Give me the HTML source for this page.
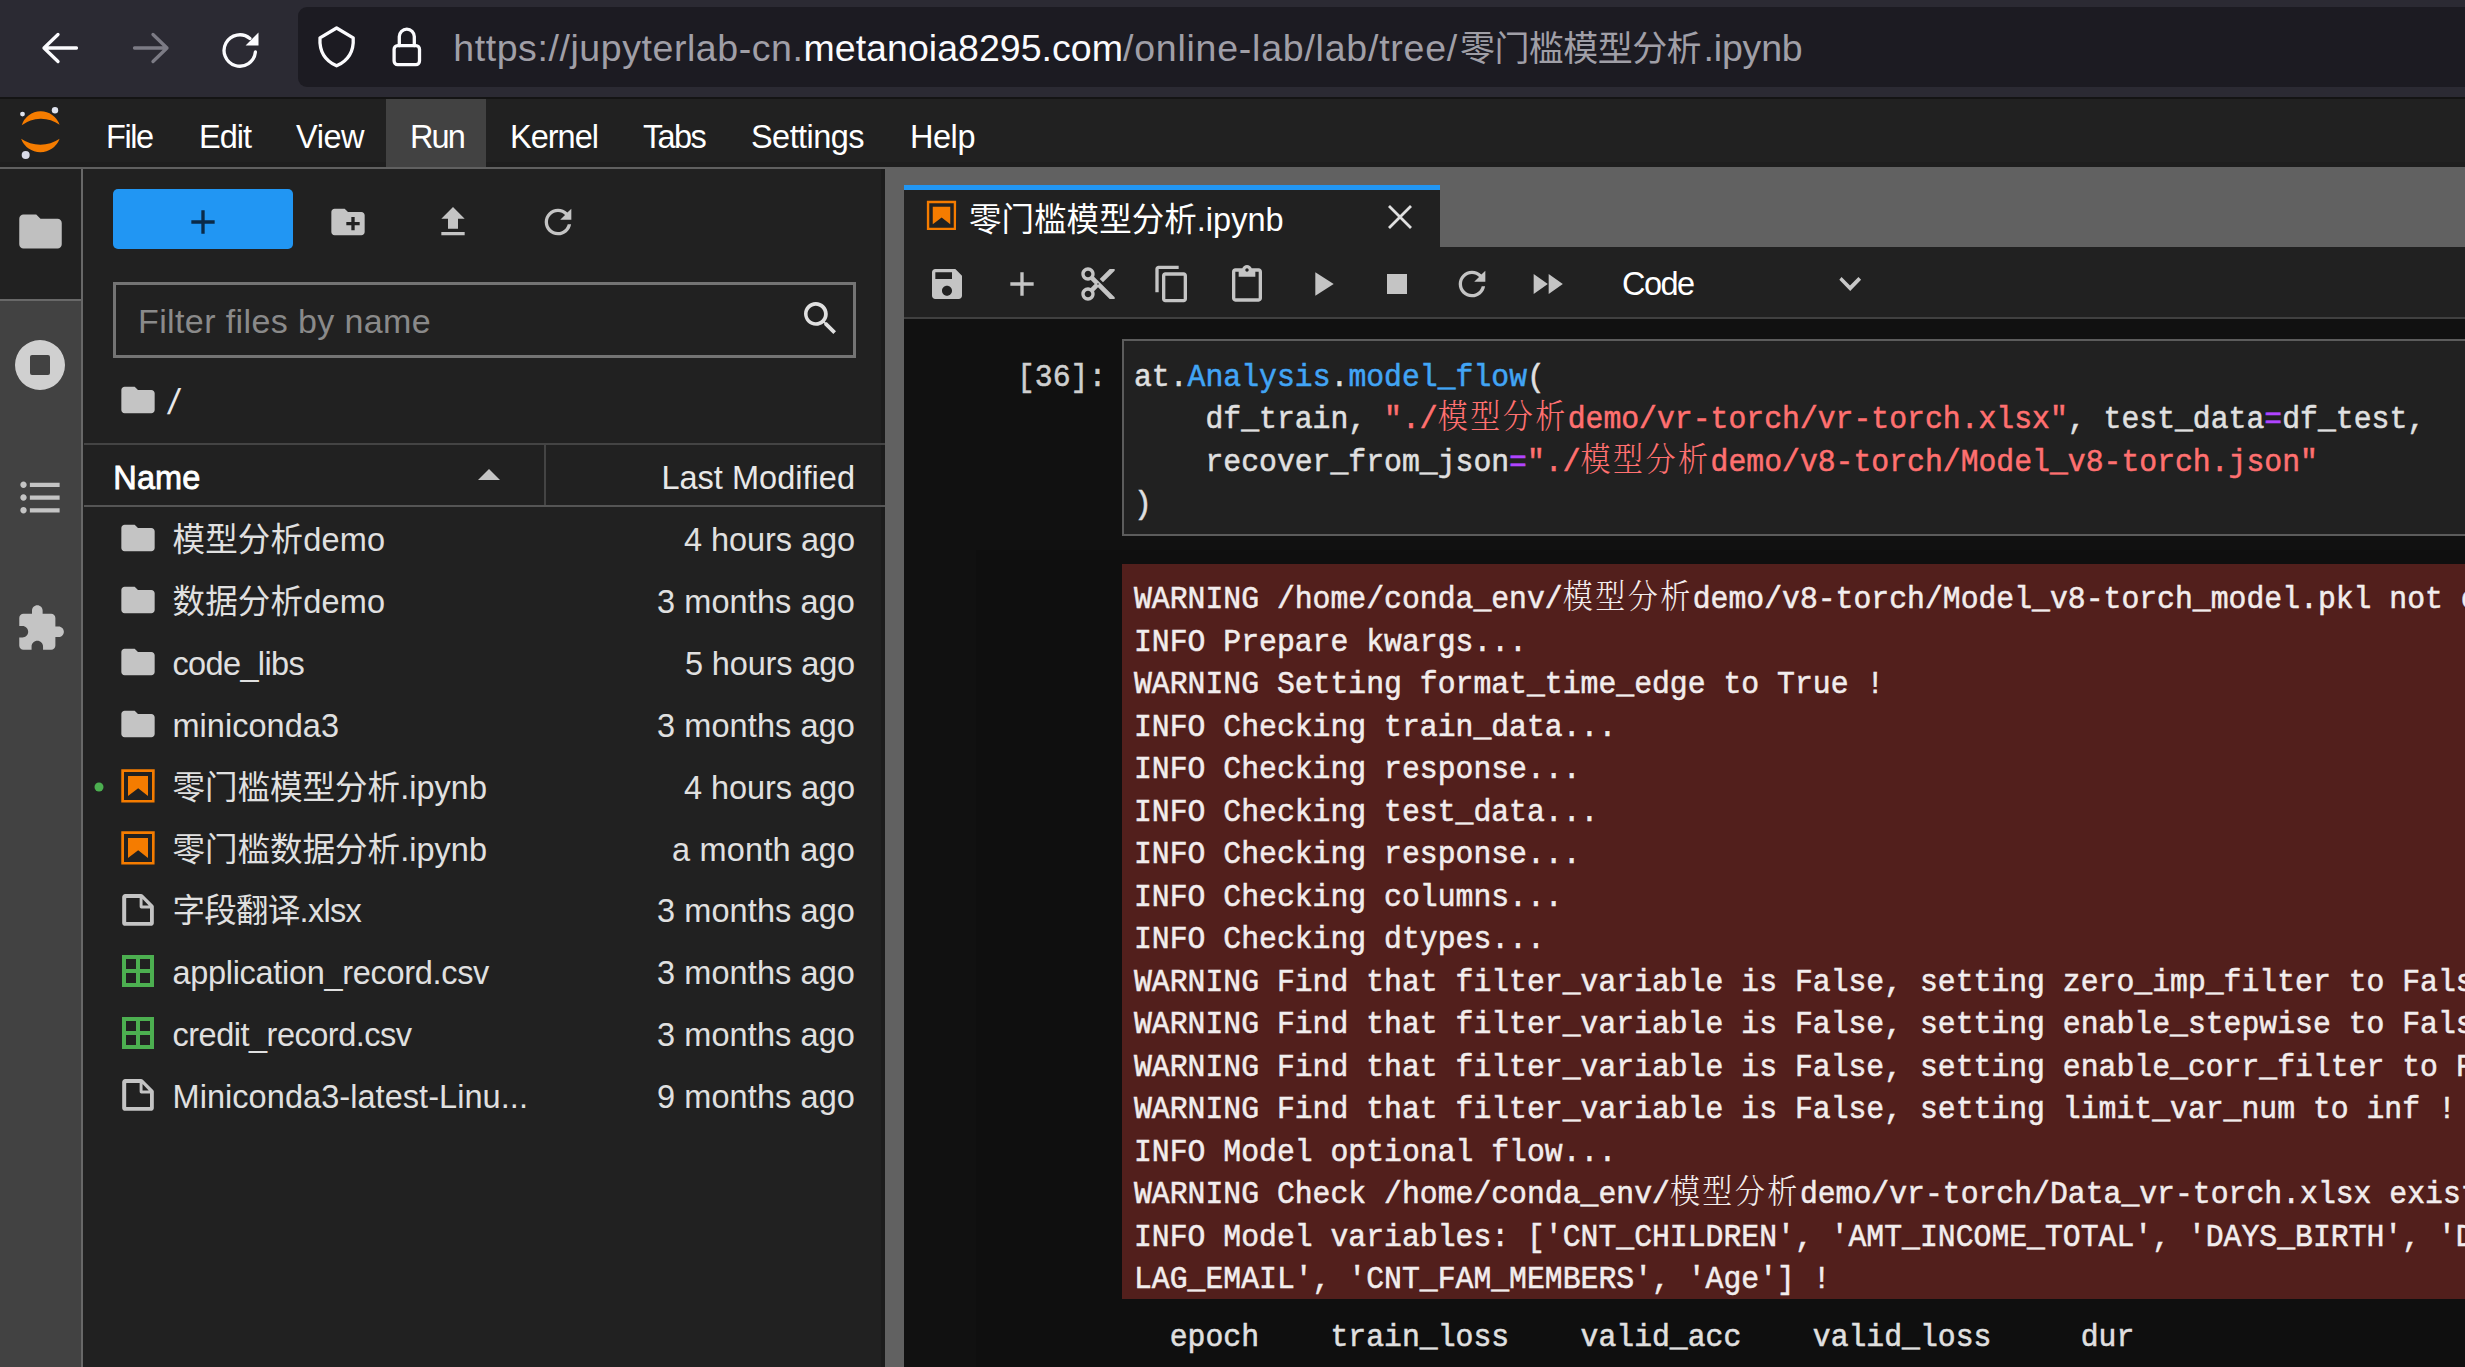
<!DOCTYPE html>
<html lang="zh"><head><meta charset="utf-8"><title>JupyterLab</title>
<style>
html,body{margin:0;padding:0;background:#111;}
body{width:2465px;height:1367px;position:relative;overflow:hidden;font-family:"Liberation Sans","Noto Sans CJK SC",sans-serif;}
#bg div,svg,.t{position:absolute;}
.t{white-space:pre;}
.c{font-family:"Liberation Mono","Noto Serif CJK SC",serif;font-size:30px;letter-spacing:2.5px;line-height:0;font-weight:300;-webkit-text-stroke:0;}
</style></head><body>
<div id="bg">
<div style="left:0px;top:0px;width:2465px;height:97px;background:#2b2a33;"></div>
<div style="left:298px;top:7px;width:2200px;height:80px;background:#1c1b22;border-radius:9px;"></div>
<div style="left:0px;top:97px;width:2465px;height:2px;background:#141414;"></div>
<div style="left:0px;top:99px;width:2465px;height:68px;background:#212121;"></div>
<div style="left:0px;top:162px;width:2465px;height:5px;background:#1e1e1e;"></div>
<div style="left:386px;top:99px;width:100px;height:68px;background:#424242;"></div>
<div style="left:0px;top:167px;width:885px;height:2.3px;background:#606060;"></div>
<div style="left:885px;top:167px;width:1600px;height:2px;background:#616161;"></div>
<div style="left:0px;top:169px;width:82px;height:1200px;background:#424242;"></div>
<div style="left:0px;top:169px;width:82px;height:130px;background:#212121;"></div>
<div style="left:0px;top:299.2px;width:82px;height:1.8px;background:#686868;"></div>
<div style="left:81.2px;top:169px;width:1.8px;height:1200px;background:#686868;"></div>
<div style="left:83.2px;top:169px;width:802px;height:1200px;background:#212121;"></div>
<div style="left:881px;top:169px;width:4px;height:1200px;background:#1c1c1c;"></div>
<div style="left:885px;top:169px;width:1600px;height:1200px;background:#616161;"></div>
<div style="left:113px;top:189px;width:180px;height:60px;background:#2196f3;border-radius:5px;"></div>
<div style="left:113px;top:282px;width:743px;height:75.5px;background:#212121;box-sizing:border-box;border:3px solid #747474;"></div>
<div style="left:84px;top:443px;width:801px;height:2px;background:#444;"></div>
<div style="left:84px;top:505px;width:801px;height:2px;background:#555;"></div>
<div style="left:544px;top:445px;width:2px;height:60px;background:#444;"></div>
<div style="left:904px;top:185px;width:536px;height:62px;background:#212121;"></div>
<div style="left:904px;top:185px;width:536px;height:5px;background:#2196f3;"></div>
<div style="left:904px;top:247px;width:1600px;height:70px;background:#212121;"></div>
<div style="left:904px;top:317px;width:1600px;height:1.8px;background:#404040;"></div>
<div style="left:904px;top:318.8px;width:1600px;height:1100px;background:#111111;"></div>
<div style="left:976px;top:549.5px;width:1600px;height:900px;background:#0f0f0f;"></div>
<div style="left:1122px;top:339px;width:1400px;height:197.3px;background:#212121;box-sizing:border-box;border:2.5px solid #5c5c5c;"></div>
<div style="left:1122px;top:563.5px;width:1400px;height:735.5px;background:#521f1c;"></div>
</div>
<svg style="left:117.6px;top:518.1px;" width="40" height="40" viewBox="0 0 24 24"><path fill="#c4c4c4" d="M10 4H4c-1.1 0-1.99.9-1.99 2L2 18c0 1.1.9 2 2 2h16c1.1 0 2-.9 2-2V8c0-1.1-.9-2-2-2h-8l-2-2z"/></svg>
<svg style="left:117.6px;top:580.0px;" width="40" height="40" viewBox="0 0 24 24"><path fill="#c4c4c4" d="M10 4H4c-1.1 0-1.99.9-1.99 2L2 18c0 1.1.9 2 2 2h16c1.1 0 2-.9 2-2V8c0-1.1-.9-2-2-2h-8l-2-2z"/></svg>
<svg style="left:117.6px;top:641.9px;" width="40" height="40" viewBox="0 0 24 24"><path fill="#c4c4c4" d="M10 4H4c-1.1 0-1.99.9-1.99 2L2 18c0 1.1.9 2 2 2h16c1.1 0 2-.9 2-2V8c0-1.1-.9-2-2-2h-8l-2-2z"/></svg>
<svg style="left:117.6px;top:703.8px;" width="40" height="40" viewBox="0 0 24 24"><path fill="#c4c4c4" d="M10 4H4c-1.1 0-1.99.9-1.99 2L2 18c0 1.1.9 2 2 2h16c1.1 0 2-.9 2-2V8c0-1.1-.9-2-2-2h-8l-2-2z"/></svg>
<svg style="left:117.6px;top:765.7px;" width="40" height="40" viewBox="0 0 22 22"><g fill="#f57c00"><path d="M18.7 3.3v15.4H3.3V3.3h15.4m1.5-1.5H1.8v18.3h18.3l.1-18.3z"/><path d="M16.5 16.5l-5.4-4.3-5.6 4.3v-11h11z"/></g></svg>
<svg style="left:117.6px;top:827.6px;" width="40" height="40" viewBox="0 0 22 22"><g fill="#f57c00"><path d="M18.7 3.3v15.4H3.3V3.3h15.4m1.5-1.5H1.8v18.3h18.3l.1-18.3z"/><path d="M16.5 16.5l-5.4-4.3-5.6 4.3v-11h11z"/></g></svg>
<svg style="left:117.6px;top:889.5px;" width="40" height="40" viewBox="0 0 22 22"><path fill="#c4c4c4" d="M19.3 8.2l-5.5-5.5c-.3-.3-.7-.5-1.2-.5H3.9c-.8.1-1.6.9-1.6 1.8v14.1c0 .9.7 1.6 1.6 1.6h14.2c.9 0 1.6-.7 1.6-1.6V9.4c.1-.5-.1-.9-.4-1.2zm-5.8-3.3l3.4 3.6h-3.4V4.9zm3.9 12.7H4.7c-.1 0-.2 0-.2-.2V4.7c0-.2.1-.3.2-.3h7.2v4.4s0 .8.3 1.1c.3.3 1.1.3 1.1.3h4.3v7.2s-.1.2-.2.2z"/></svg>
<svg style="left:117.6px;top:951.4000000000001px;" width="40" height="40" viewBox="0 0 22 22"><path fill="#4caf50" d="M2.2 2.2v17.6h17.6V2.2H2.2zm15.4 7.7h-5.5V4.4h5.5v5.5zM9.9 4.4v5.5H4.4V4.4h5.5zm-5.5 7.7h5.5v5.5H4.4v-5.5zm7.7 5.5v-5.5h5.5v5.5h-5.5z"/></svg>
<svg style="left:117.6px;top:1013.3px;" width="40" height="40" viewBox="0 0 22 22"><path fill="#4caf50" d="M2.2 2.2v17.6h17.6V2.2H2.2zm15.4 7.7h-5.5V4.4h5.5v5.5zM9.9 4.4v5.5H4.4V4.4h5.5zm-5.5 7.7h5.5v5.5H4.4v-5.5zm7.7 5.5v-5.5h5.5v5.5h-5.5z"/></svg>
<svg style="left:117.6px;top:1075.2px;" width="40" height="40" viewBox="0 0 22 22"><path fill="#c4c4c4" d="M19.3 8.2l-5.5-5.5c-.3-.3-.7-.5-1.2-.5H3.9c-.8.1-1.6.9-1.6 1.8v14.1c0 .9.7 1.6 1.6 1.6h14.2c.9 0 1.6-.7 1.6-1.6V9.4c.1-.5-.1-.9-.4-1.2zm-5.8-3.3l3.4 3.6h-3.4V4.9zm3.9 12.7H4.7c-.1 0-.2 0-.2-.2V4.7c0-.2.1-.3.2-.3h7.2v4.4s0 .8.3 1.1c.3.3 1.1.3 1.1.3h4.3v7.2s-.1.2-.2.2z"/></svg>
<svg style="left:93px;top:781px;" width="12" height="12" viewBox="0 0 12 12"><circle cx="6" cy="6" r="4.5" fill="#4caf50"/></svg>
<svg style="left:117.6px;top:380px;" width="40" height="40" viewBox="0 0 24 24"><path fill="#c4c4c4" d="M10 4H4c-1.1 0-1.99.9-1.99 2L2 18c0 1.1.9 2 2 2h16c1.1 0 2-.9 2-2V8c0-1.1-.9-2-2-2h-8l-2-2z"/></svg>
<svg style="left:478px;top:468px;" width="22" height="13" viewBox="0 0 22 13"><path fill="#c4c4c4" d="M0 12L11 1l11 11z"/></svg>
<svg style="left:183px;top:202px;" width="40" height="40" viewBox="0 0 24 24"><path fill="#0a2a48" d="M19 13h-6v6h-2v-6H5v-2h6V5h2v6h6v2z"/></svg>
<svg style="left:327.5px;top:202px;" width="40" height="40" viewBox="0 0 24 24"><path fill="#c4c4c4" d="M20 6h-8l-2-2H4c-1.11 0-1.99.89-1.99 2L2 18c0 1.11.89 2 2 2h16c1.11 0 2-.89 2-2V8c0-1.11-.89-2-2-2zm-1 8h-3v3h-2v-3h-3v-2h3V9h2v3h3v2z"/></svg>
<svg style="left:433px;top:202px;" width="40" height="40" viewBox="0 0 24 24"><path fill="#c4c4c4" d="M9 16h6v-6h4l-7-7-7 7h4zm-4 2h14v2H5z"/></svg>
<svg style="left:538.3px;top:201.9px;" width="40" height="40" viewBox="0 0 18 18"><path fill="#c4c4c4" d="M9 13.5c-2.49 0-4.5-2.01-4.5-4.5S6.51 4.5 9 4.5c1.24 0 2.36.52 3.17 1.33L10 8h5V3l-1.76 1.76C12.15 3.68 10.66 3 9 3 5.69 3 3.01 5.69 3.01 9S5.69 15 9 15c2.97 0 5.43-2.16 5.9-5h-1.52c-.46 2-2.24 3.5-4.38 3.5z"/></svg>
<svg style="left:800px;top:298px;" width="40" height="40" viewBox="0 0 18 18"><path fill="#e0e0e0" d="M12.1 10.9h-.7l-.2-.2c.8-.9 1.3-2.2 1.3-3.5 0-3-2.4-5.4-5.4-5.4S1.8 4.2 1.8 7.1s2.4 5.4 5.4 5.4c1.3 0 2.5-.5 3.5-1.3l.2.2v.7l4.1 4.1 1.2-1.2-4.1-4.1zm-5 0c-2.1 0-3.7-1.7-3.7-3.7s1.7-3.7 3.7-3.7 3.7 1.7 3.7 3.7-1.6 3.7-3.7 3.7z"/></svg>
<svg style="left:14.5px;top:206px;" width="51" height="51" viewBox="0 0 24 24"><path fill="#c0c0c0" d="M10 4H4c-1.1 0-1.99.9-1.99 2L2 18c0 1.1.9 2 2 2h16c1.1 0 2-.9 2-2V8c0-1.1-.9-2-2-2h-8l-2-2z"/></svg>
<svg style="left:15px;top:340px;" width="50" height="50" viewBox="0 0 50 50"><path fill="#d0d0d0" fill-rule="evenodd" d="M25 0a25 25 0 1 0 0 50a25 25 0 1 0 0-50zM17 15h16a2 2 0 0 1 2 2v16a2 2 0 0 1-2 2H17a2 2 0 0 1-2-2V17a2 2 0 0 1 2-2z"/></svg>
<svg style="left:14.5px;top:472px;" width="51" height="51" viewBox="0 0 24 24"><path fill="#c4c4c4" d="M4 10.5c-.83 0-1.5.67-1.5 1.5s.67 1.5 1.5 1.5 1.5-.67 1.5-1.5-.67-1.5-1.5-1.5zm0-6c-.83 0-1.5.67-1.5 1.5S3.17 7.5 4 7.5 5.5 6.83 5.5 6 4.83 4.5 4 4.5zm0 12c-.83 0-1.5.68-1.5 1.5s.68 1.5 1.5 1.5 1.5-.68 1.5-1.5-.67-1.5-1.5-1.5zM7 19h14v-2H7v2zm0-6h14v-2H7v2zm0-8v2h14V5H7z"/></svg>
<svg style="left:14.5px;top:603px;" width="51" height="51" viewBox="0 0 24 24"><path fill="#c4c4c4" d="M20.5 11H19V7c0-1.1-.9-2-2-2h-4V3.5C13 2.12 11.88 1 10.5 1S8 2.12 8 3.5V5H4c-1.1 0-1.99.9-1.99 2v3.8H3.5c1.49 0 2.7 1.21 2.7 2.7s-1.21 2.7-2.7 2.7H2V20c0 1.1.9 2 2 2h3.8v-1.5c0-1.49 1.21-2.7 2.7-2.7 1.49 0 2.7 1.21 2.7 2.7V22H17c1.1 0 2-.9 2-2v-4h1.5c1.38 0 2.5-1.12 2.5-2.5S21.88 11 20.5 11z"/></svg>
<svg style="left:0px;top:99px;" width="90" height="68" viewBox="0 99 90 68"><path fill="#f57c00" d="M21.700 125.200A20 20 0 0 1 59.600 124.700A31.600 31.600 0 0 0 21.700 125.200z"/>
<path fill="#f57c00" d="M21.100 138.800A34.400 34.400 0 0 0 59.600 138.800A20.500 20.500 0 0 1 21.100 138.800z"/>
<circle cx="55" cy="110.300" r="3.200" fill="#dfe3ee"/><circle cx="22.500" cy="114.100" r="2.400" fill="#dfe3ee"/><circle cx="25.700" cy="155" r="4" fill="#d9dbe8"/></svg>
<svg style="left:0px;top:0px;" width="460" height="97" viewBox="0 0 460 97"><g fill="none" stroke="#fbfbfe" stroke-width="3.300" stroke-linecap="round" stroke-linejoin="round">
<path d="M76.500 48H44M58 34.500L44 48l14 13.500"/>
<path stroke="#7c7b85" d="M134.500 48H167M153 34.500L167 48l-14 13.500"/>
<path d="M249.900 38.500A15.700 15.700 0 1 0 255.400 52"/>
<path d="M336.600 28L353.200 37.800C354 51 348.500 60.500 336.600 65.800C324.700 60.500 319.200 51 320 37.800Z"/>
<rect x="394.100" y="45.700" width="25.400" height="18.900" rx="3.500"/>
<path d="M399.300 45.700V36.600a7.500 7.500 0 0 1 15 0V45.700"/>
</g>
<path fill="#fbfbfe" d="M258.500 32.500V45.400H245.600Z"/></svg>
<svg style="left:923.9px;top:197.6px;" width="35" height="35" viewBox="0 0 22 22"><g fill="#f57c00"><path d="M18.7 3.3v15.4H3.3V3.3h15.4m1.5-1.5H1.8v18.3h18.3l.1-18.3z"/><path d="M16.5 16.5l-5.4-4.3-5.6 4.3v-11h11z"/></g></svg>
<svg style="left:1386px;top:203px;" width="28" height="28" viewBox="0 0 28 28"><path d="M3 3l22 22M25 3L3 25" stroke="#e0e0e0" stroke-width="2.800" fill="none"/></svg>
<svg style="left:926.7px;top:264.2px;" width="40" height="40" viewBox="0 0 24 24"><path fill="#c4c4c4" d="M17 3H5c-1.11 0-2 .9-2 2v14c0 1.1.89 2 2 2h14c1.1 0 2-.9 2-2V7l-4-4zm-5 16c-1.660 0-3-1.340-3-3s1.340-3 3-3 3 1.340 3 3-1.340 3-3 3zm3-10H5V5h10v4z"/></svg>
<svg style="left:1001.7px;top:264.2px;" width="40" height="40" viewBox="0 0 24 24"><path fill="#c4c4c4" d="M19 13h-6v6h-2v-6H5v-2h6V5h2v6h6v2z"/></svg>
<svg style="left:1077.5px;top:264.0px;" width="40" height="40" viewBox="0 0 24 24"><path fill="#c4c4c4" d="M9.640 7.640c.230-.500.360-1.050.360-1.640 0-2.210-1.790-4-4-4S2 3.790 2 6s1.790 4 4 4c.590 0 1.140-.130 1.640-.360L10 12l-2.360 2.360C7.140 14.130 6.590 14 6 14c-2.210 0-4 1.790-4 4s1.790 4 4 4 4-1.790 4-4c0-.590-.130-1.140-.360-1.640L12 14l7 7h3v-1L9.640 7.640zM6 8c-1.100 0-2-.890-2-2s.900-2 2-2 2 .890 2 2-.900 2-2 2zm0 12c-1.100 0-2-.890-2-2s.900-2 2-2 2 .890 2 2-.900 2-2 2zm6-7.500c-.280 0-.500-.220-.500-.500s.220-.500.500-.500.500.220.500.500-.220.500-.500.500zM19 3l-6 6 2 2 7-7V3h-3z"/></svg>
<svg style="left:1152.0px;top:264.0px;" width="40" height="40" viewBox="0 0 24 24"><path fill="#c4c4c4" d="M16 1H4c-1.100 0-2 .900-2 2v14h2V3h12V1zm3 4H8c-1.100 0-2 .900-2 2v14c0 1.100.900 2 2 2h11c1.100 0 2-.900 2-2V7c0-1.100-.900-2-2-2zm0 16H8V7h11v14z"/></svg>
<svg style="left:1226.8px;top:264.5px;" width="40" height="40" viewBox="0 0 24 24"><path fill="#c4c4c4" d="M19 2h-4.180C14.400.840 13.300 0 12 0c-1.300 0-2.400.840-2.820 2H5c-1.100 0-2 .900-2 2v16c0 1.100.900 2 2 2h14c1.100 0 2-.900 2-2V4c0-1.100-.900-2-2-2zm-7 0c.550 0 1 .450 1 1s-.450 1-1 1-1-.450-1-1 .450-1 1-1zm7 18H5V4h2v3h10V4h2v16z"/></svg>
<svg style="left:1301.8px;top:264.2px;" width="40" height="40" viewBox="0 0 24 24"><path fill="#c4c4c4" d="M8 5v14l11-7z"/></svg>
<svg style="left:1377.0px;top:264.2px;" width="40" height="40" viewBox="0 0 24 24"><path fill="#c4c4c4" d="M6 6h12v12H6z"/></svg>
<svg style="left:1452.0px;top:264.2px;" width="40" height="40" viewBox="0 0 18 18"><path fill="#c4c4c4" d="M9 13.500c-2.490 0-4.500-2.010-4.500-4.500S6.510 4.500 9 4.500c1.240 0 2.360.520 3.170 1.330L10 8h5V3l-1.760 1.760C12.150 3.680 10.660 3 9 3 5.690 3 3.010 5.690 3.010 9S5.690 15 9 15c2.970 0 5.430-2.160 5.900-5h-1.520c-.460 2-2.240 3.500-4.380 3.500z"/></svg>
<svg style="left:1527.0px;top:264.2px;" width="40" height="40" viewBox="0 0 24 24"><path fill="#c4c4c4" d="M4 18l8.500-6L4 6v12zm9-12v12l8.500-6L13 6z"/></svg>
<svg style="left:1830px;top:264px;" width="40" height="40" viewBox="0 0 18 18"><path fill="#c8c8c8" d="M5.200 5.900L9 9.700l3.800-3.800 1.200 1.200-4.900 5-4.900-5z"/></svg>
<div class="t" style="left:453.30px;top:21.81px;font-size:37.5px;line-height:52px;color:#a09fa7;letter-spacing:0.569px;">https://jupyterlab-cn.</div>
<div class="t" style="left:803.50px;top:21.81px;font-size:37.5px;line-height:52px;color:#fbfbfe;letter-spacing:0.034px;">metanoia8295.com</div>
<div class="t" style="left:1123.00px;top:21.81px;font-size:37.5px;line-height:52px;color:#a09fa7;letter-spacing:0.764px;">/online-lab/lab/tree/</div>
<div class="t" style="left:1460.00px;top:24.17px;font-size:35px;line-height:49px;color:#a09fa7;letter-spacing:-0.574px;">零门槛模型分析</div>
<div class="t" style="left:1703.50px;top:21.81px;font-size:37.5px;line-height:52px;color:#a09fa7;letter-spacing:-0.180px;">.ipynb</div>
<div class="t" style="left:106.00px;top:113.54px;font-size:32.5px;line-height:46px;color:#ffffff;letter-spacing:-1.469px;">File</div>
<div class="t" style="left:199.00px;top:113.54px;font-size:32.5px;line-height:46px;color:#ffffff;letter-spacing:-1.004px;">Edit</div>
<div class="t" style="left:296.00px;top:113.54px;font-size:32.5px;line-height:46px;color:#ffffff;letter-spacing:-0.465px;">View</div>
<div class="t" style="left:410.00px;top:113.54px;font-size:32.5px;line-height:46px;color:#ffffff;letter-spacing:-1.875px;">Run</div>
<div class="t" style="left:510.00px;top:113.54px;font-size:32.5px;line-height:46px;color:#ffffff;letter-spacing:-0.992px;">Kernel</div>
<div class="t" style="left:643.00px;top:113.54px;font-size:32.5px;line-height:46px;color:#ffffff;letter-spacing:-1.664px;">Tabs</div>
<div class="t" style="left:751.00px;top:113.54px;font-size:32.5px;line-height:46px;color:#ffffff;letter-spacing:-0.555px;">Settings</div>
<div class="t" style="left:910.00px;top:113.54px;font-size:32.5px;line-height:46px;color:#ffffff;letter-spacing:-0.461px;">Help</div>
<div class="t" style="left:138.00px;top:297.22px;font-size:34px;line-height:48px;color:#8a8a8a;letter-spacing:0.384px;">Filter files by name</div>
<div class="t" style="left:169.00px;top:377.03px;font-size:36px;line-height:50px;color:#e8e8e8;transform:skewX(-9deg);">/</div>
<div class="t" style="left:113.30px;top:454.94px;font-size:32.5px;line-height:46px;color:#ffffff;letter-spacing:0.124px;-webkit-text-stroke:0.8px #fff;">Name</div>
<div class="t" style="left:661.40px;top:454.94px;font-size:32.5px;line-height:46px;color:#e8e8e8;letter-spacing:0.022px;">Last Modified</div>
<div class="t" style="left:172.50px;top:517.04px;font-size:32.5px;line-height:46px;color:#e0e0e0;letter-spacing:0.173px;">模型分析demo</div>
<div class="t" style="left:684.00px;top:517.04px;font-size:32.5px;line-height:46px;color:#e0e0e0;letter-spacing:-0.061px;">4 hours ago</div>
<div class="t" style="left:172.50px;top:578.94px;font-size:32.5px;line-height:46px;color:#e0e0e0;letter-spacing:0.173px;">数据分析demo</div>
<div class="t" style="left:657.00px;top:578.94px;font-size:32.5px;line-height:46px;color:#e0e0e0;letter-spacing:0.089px;">3 months ago</div>
<div class="t" style="left:172.50px;top:640.84px;font-size:32.5px;line-height:46px;color:#e0e0e0;letter-spacing:-0.648px;">code_libs</div>
<div class="t" style="left:685.00px;top:640.84px;font-size:32.5px;line-height:46px;color:#e0e0e0;letter-spacing:-0.152px;">5 hours ago</div>
<div class="t" style="left:172.50px;top:702.74px;font-size:32.5px;line-height:46px;color:#e0e0e0;letter-spacing:0.028px;">miniconda3</div>
<div class="t" style="left:657.00px;top:702.74px;font-size:32.5px;line-height:46px;color:#e0e0e0;letter-spacing:0.089px;">3 months ago</div>
<div class="t" style="left:172.50px;top:764.64px;font-size:32.5px;line-height:46px;color:#e0e0e0;letter-spacing:0.020px;">零门槛模型分析.ipynb</div>
<div class="t" style="left:684.00px;top:764.64px;font-size:32.5px;line-height:46px;color:#e0e0e0;letter-spacing:-0.061px;">4 hours ago</div>
<div class="t" style="left:172.50px;top:826.54px;font-size:32.5px;line-height:46px;color:#e0e0e0;letter-spacing:0.020px;">零门槛数据分析.ipynb</div>
<div class="t" style="left:672.00px;top:826.54px;font-size:32.5px;line-height:46px;color:#e0e0e0;letter-spacing:0.210px;">a month ago</div>
<div class="t" style="left:172.50px;top:888.44px;font-size:32.5px;line-height:46px;color:#e0e0e0;letter-spacing:-0.724px;">字段翻译.xlsx</div>
<div class="t" style="left:657.00px;top:888.44px;font-size:32.5px;line-height:46px;color:#e0e0e0;letter-spacing:0.089px;">3 months ago</div>
<div class="t" style="left:172.50px;top:950.34px;font-size:32.5px;line-height:46px;color:#e0e0e0;letter-spacing:-0.312px;">application_record.csv</div>
<div class="t" style="left:657.00px;top:950.34px;font-size:32.5px;line-height:46px;color:#e0e0e0;letter-spacing:0.089px;">3 months ago</div>
<div class="t" style="left:172.50px;top:1012.24px;font-size:32.5px;line-height:46px;color:#e0e0e0;letter-spacing:-0.497px;">credit_record.csv</div>
<div class="t" style="left:657.00px;top:1012.24px;font-size:32.5px;line-height:46px;color:#e0e0e0;letter-spacing:0.089px;">3 months ago</div>
<div class="t" style="left:172.50px;top:1074.14px;font-size:32.5px;line-height:46px;color:#e0e0e0;letter-spacing:0.057px;">Miniconda3-latest-Linu...</div>
<div class="t" style="left:657.00px;top:1074.14px;font-size:32.5px;line-height:46px;color:#e0e0e0;letter-spacing:0.089px;">9 months ago</div>
<div class="t" style="left:969.00px;top:197.24px;font-size:32.5px;line-height:46px;color:#ffffff;letter-spacing:0.036px;">零门槛模型分析.ipynb</div>
<div class="t" style="left:1622.00px;top:261.24px;font-size:32.5px;line-height:46px;color:#ffffff;letter-spacing:-1.551px;">Code</div>
<div class="t" style="left:1017.00px;top:357.06px;font-size:29.78px;line-height:42px;color:#cfcfcf;font-family:'Liberation Mono','Noto Serif CJK SC',monospace;-webkit-text-stroke:0.5px;transform:scaleY(1.08);transform-origin:0 28.94px;">[36]:</div>
<div class="t" style="left:1134.00px;top:357.06px;font-size:29.78px;line-height:42px;color:#e0e0e0;font-family:'Liberation Mono','Noto Serif CJK SC',monospace;-webkit-text-stroke:0.5px;transform:scaleY(1.08);transform-origin:0 28.94px;">at.<span style="color:#42a5f5">Analysis</span>.<span style="color:#42a5f5">model_flow</span>(</div>
<div class="t" style="left:1134.00px;top:399.26px;font-size:29.78px;line-height:42px;color:#e0e0e0;font-family:'Liberation Mono','Noto Serif CJK SC',monospace;-webkit-text-stroke:0.5px;transform:scaleY(1.08);transform-origin:0 28.94px;">    df_train, <span style="color:#ff7070">"./<span class="c">模型分析</span>demo/vr-torch/vr-torch.xlsx"</span>, test_data<span style="color:#b044ff">=</span>df_test,</div>
<div class="t" style="left:1134.00px;top:441.76px;font-size:29.78px;line-height:42px;color:#e0e0e0;font-family:'Liberation Mono','Noto Serif CJK SC',monospace;-webkit-text-stroke:0.5px;transform:scaleY(1.08);transform-origin:0 28.94px;">    recover_from_json<span style="color:#b044ff">=</span><span style="color:#ff7070">"./<span class="c">模型分析</span>demo/v8-torch/Model_v8-torch.json"</span></div>
<div class="t" style="left:1134.00px;top:484.26px;font-size:29.78px;line-height:42px;color:#e0e0e0;font-family:'Liberation Mono','Noto Serif CJK SC',monospace;-webkit-text-stroke:0.5px;transform:scaleY(1.08);transform-origin:0 28.94px;">)</div>
<div class="t" style="left:1134.00px;top:579.06px;font-size:29.78px;line-height:42px;color:#f2eded;font-family:'Liberation Mono','Noto Serif CJK SC',monospace;-webkit-text-stroke:0.5px;transform:scaleY(1.08);transform-origin:0 28.94px;">WARNING /home/conda_env/<span class="c">模型分析</span>demo/v8-torch/Model_v8-torch_model.pkl not exists !</div>
<div class="t" style="left:1134.00px;top:621.56px;font-size:29.78px;line-height:42px;color:#f2eded;font-family:'Liberation Mono','Noto Serif CJK SC',monospace;-webkit-text-stroke:0.5px;transform:scaleY(1.08);transform-origin:0 28.94px;">INFO Prepare kwargs...</div>
<div class="t" style="left:1134.00px;top:664.06px;font-size:29.78px;line-height:42px;color:#f2eded;font-family:'Liberation Mono','Noto Serif CJK SC',monospace;-webkit-text-stroke:0.5px;transform:scaleY(1.08);transform-origin:0 28.94px;">WARNING Setting format_time_edge to True !</div>
<div class="t" style="left:1134.00px;top:706.56px;font-size:29.78px;line-height:42px;color:#f2eded;font-family:'Liberation Mono','Noto Serif CJK SC',monospace;-webkit-text-stroke:0.5px;transform:scaleY(1.08);transform-origin:0 28.94px;">INFO Checking train_data...</div>
<div class="t" style="left:1134.00px;top:749.06px;font-size:29.78px;line-height:42px;color:#f2eded;font-family:'Liberation Mono','Noto Serif CJK SC',monospace;-webkit-text-stroke:0.5px;transform:scaleY(1.08);transform-origin:0 28.94px;">INFO Checking response...</div>
<div class="t" style="left:1134.00px;top:791.56px;font-size:29.78px;line-height:42px;color:#f2eded;font-family:'Liberation Mono','Noto Serif CJK SC',monospace;-webkit-text-stroke:0.5px;transform:scaleY(1.08);transform-origin:0 28.94px;">INFO Checking test_data...</div>
<div class="t" style="left:1134.00px;top:834.06px;font-size:29.78px;line-height:42px;color:#f2eded;font-family:'Liberation Mono','Noto Serif CJK SC',monospace;-webkit-text-stroke:0.5px;transform:scaleY(1.08);transform-origin:0 28.94px;">INFO Checking response...</div>
<div class="t" style="left:1134.00px;top:876.56px;font-size:29.78px;line-height:42px;color:#f2eded;font-family:'Liberation Mono','Noto Serif CJK SC',monospace;-webkit-text-stroke:0.5px;transform:scaleY(1.08);transform-origin:0 28.94px;">INFO Checking columns...</div>
<div class="t" style="left:1134.00px;top:919.06px;font-size:29.78px;line-height:42px;color:#f2eded;font-family:'Liberation Mono','Noto Serif CJK SC',monospace;-webkit-text-stroke:0.5px;transform:scaleY(1.08);transform-origin:0 28.94px;">INFO Checking dtypes...</div>
<div class="t" style="left:1134.00px;top:961.56px;font-size:29.78px;line-height:42px;color:#f2eded;font-family:'Liberation Mono','Noto Serif CJK SC',monospace;-webkit-text-stroke:0.5px;transform:scaleY(1.08);transform-origin:0 28.94px;">WARNING Find that filter_variable is False, setting zero_imp_filter to False !</div>
<div class="t" style="left:1134.00px;top:1004.06px;font-size:29.78px;line-height:42px;color:#f2eded;font-family:'Liberation Mono','Noto Serif CJK SC',monospace;-webkit-text-stroke:0.5px;transform:scaleY(1.08);transform-origin:0 28.94px;">WARNING Find that filter_variable is False, setting enable_stepwise to False !</div>
<div class="t" style="left:1134.00px;top:1046.56px;font-size:29.78px;line-height:42px;color:#f2eded;font-family:'Liberation Mono','Noto Serif CJK SC',monospace;-webkit-text-stroke:0.5px;transform:scaleY(1.08);transform-origin:0 28.94px;">WARNING Find that filter_variable is False, setting enable_corr_filter to False !</div>
<div class="t" style="left:1134.00px;top:1089.06px;font-size:29.78px;line-height:42px;color:#f2eded;font-family:'Liberation Mono','Noto Serif CJK SC',monospace;-webkit-text-stroke:0.5px;transform:scaleY(1.08);transform-origin:0 28.94px;">WARNING Find that filter_variable is False, setting limit_var_num to inf !</div>
<div class="t" style="left:1134.00px;top:1131.56px;font-size:29.78px;line-height:42px;color:#f2eded;font-family:'Liberation Mono','Noto Serif CJK SC',monospace;-webkit-text-stroke:0.5px;transform:scaleY(1.08);transform-origin:0 28.94px;">INFO Model optional flow...</div>
<div class="t" style="left:1134.00px;top:1174.06px;font-size:29.78px;line-height:42px;color:#f2eded;font-family:'Liberation Mono','Noto Serif CJK SC',monospace;-webkit-text-stroke:0.5px;transform:scaleY(1.08);transform-origin:0 28.94px;">WARNING Check /home/conda_env/<span class="c">模型分析</span>demo/vr-torch/Data_vr-torch.xlsx exists !</div>
<div class="t" style="left:1134.00px;top:1216.56px;font-size:29.78px;line-height:42px;color:#f2eded;font-family:'Liberation Mono','Noto Serif CJK SC',monospace;-webkit-text-stroke:0.5px;transform:scaleY(1.08);transform-origin:0 28.94px;">INFO Model variables: ['CNT_CHILDREN', 'AMT_INCOME_TOTAL', 'DAYS_BIRTH', 'DAYS_EMPLOYED', 'F</div>
<div class="t" style="left:1134.00px;top:1259.06px;font-size:29.78px;line-height:42px;color:#f2eded;font-family:'Liberation Mono','Noto Serif CJK SC',monospace;-webkit-text-stroke:0.5px;transform:scaleY(1.08);transform-origin:0 28.94px;">LAG_EMAIL', 'CNT_FAM_MEMBERS', 'Age'] !</div>
<div class="t" style="left:1134.00px;top:1316.66px;font-size:29.78px;line-height:42px;color:#e0e0e0;font-family:'Liberation Mono','Noto Serif CJK SC',monospace;-webkit-text-stroke:0.5px;transform:scaleY(1.08);transform-origin:0 28.94px;">  epoch    train_loss    valid_acc    valid_loss     dur</div>
</body></html>
